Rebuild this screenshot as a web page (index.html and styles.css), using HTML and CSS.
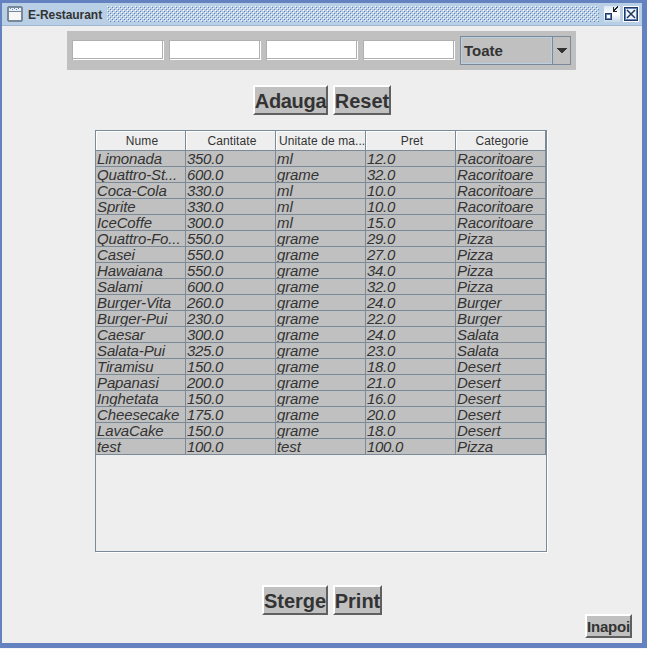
FILE: index.html
```
<!DOCTYPE html>
<html lang="ro">
<head>
<meta charset="utf-8">
<title>E-Restaurant</title>
<link rel="stylesheet" href="styles.css">
</head>
<body>
<main class="frame">
  <header class="titlebar">
    <svg class="appicon" width="16" height="16" shape-rendering="crispEdges">
      <rect width="16" height="16" fill="#778899"/>
      <path d="M2 2h12v3H2z" fill="#e8f1fc"/><path d="M2 6h12v8H2z" fill="#f7f7f7"/>
      <path d="M3 2h1v1H3zM5 3h1v1H5zM7 2h1v1H7zM9 3h1v1H9zM11 2h1v1h-1z" fill="#6382bf"/>
      <path d="M0 0h1v1H0zM15 0h1v1h-1zM0 15h1v1H0zM15 15h1v1h-1z" fill="#b8cfe5"/>
    </svg>
    <h1>E-Restaurant</h1>
    <svg class="bumps" width="492" height="16" shape-rendering="crispEdges">
      <defs><pattern id="bump" width="4" height="4" patternUnits="userSpaceOnUse">
        <path d="M0 0h1v1H0zM2 2h1v1H2z" fill="#fff"/><path d="M1 1h1v1H1zM3 3h1v1H3z" fill="#6382bf"/>
      </pattern></defs>
      <rect width="492" height="16" fill="url(#bump)"/>
    </svg>
    <svg class="wbtn" width="16" height="16" shape-rendering="crispEdges">
      <defs><linearGradient id="g" x2="0" y2="1"><stop stop-color="#dce8f4"/><stop offset=".5" stop-color="#fff"/><stop offset="1" stop-color="#c4d7ea"/></linearGradient></defs>
      <rect width="16" height="16" fill="url(#g)"/>
      <path d="M1 7h7v7H1z" fill="#24375f"/><path d="M2 8h5v5H2z" fill="#6382bf"/><path d="M3 9h3v3H3z" fill="#fff"/>
      <path d="M9 1h1v3h1v1h2v1H9zM10 4V3h1v1zM11 4V2h1v2zM12 3V1h1v2zM13 2V0h1v2z" fill="#222"/>
    </svg>
    <svg class="wbtn" width="16" height="16" shape-rendering="crispEdges">
      <rect width="16" height="16" fill="#fff"/><rect x="1" y="1" width="14" height="14" fill="#24375f"/>
      <rect x="2" y="2" width="12" height="12" fill="#6382bf"/><rect x="3" y="3" width="10" height="10" fill="#edf4fb"/>
      <path d="M4 4l8 8M12 4l-8 8" stroke="#24375f" stroke-width="1.5" shape-rendering="auto"/>
    </svg>
  </header>
  <section class="filters">
    <input class="field" aria-label="Nume"><input class="field" aria-label="Cantitate"><input class="field" aria-label="Unitate"><input class="field" aria-label="Pret">
    <div class="combo"><span>Toate</span><i><svg width="10" height="5" shape-rendering="crispEdges"><path d="M0 0h10v1H9v1H8v1H7v1H6v1H4V4H3V3H2V2H1V1H0z" fill="#333"/></svg></i></div>
  </section>
  <div class="actions"><button class="add">Adauga</button><button class="reset">Reset</button></div>
  <div class="tablebox">
    <table>
      <thead><tr><th>Nume</th><th>Cantitate</th><th>Unitate de ma...</th><th>Pret</th><th>Categorie</th></tr></thead>
      <tbody>
      <tr><td>Limonada</td><td>350.0</td><td>ml</td><td>12.0</td><td>Racoritoare</td></tr>
      <tr><td>Quattro-St...</td><td>600.0</td><td>grame</td><td>32.0</td><td>Racoritoare</td></tr>
      <tr><td>Coca-Cola</td><td>330.0</td><td>ml</td><td>10.0</td><td>Racoritoare</td></tr>
      <tr><td>Sprite</td><td>330.0</td><td>ml</td><td>10.0</td><td>Racoritoare</td></tr>
      <tr><td>IceCoffe</td><td>300.0</td><td>ml</td><td>15.0</td><td>Racoritoare</td></tr>
      <tr><td>Quattro-Fo...</td><td>550.0</td><td>grame</td><td>29.0</td><td>Pizza</td></tr>
      <tr><td>Casei</td><td>550.0</td><td>grame</td><td>27.0</td><td>Pizza</td></tr>
      <tr><td>Hawaiana</td><td>550.0</td><td>grame</td><td>34.0</td><td>Pizza</td></tr>
      <tr><td>Salami</td><td>600.0</td><td>grame</td><td>32.0</td><td>Pizza</td></tr>
      <tr><td>Burger-Vita</td><td>260.0</td><td>grame</td><td>24.0</td><td>Burger</td></tr>
      <tr><td>Burger-Pui</td><td>230.0</td><td>grame</td><td>22.0</td><td>Burger</td></tr>
      <tr><td>Caesar</td><td>300.0</td><td>grame</td><td>24.0</td><td>Salata</td></tr>
      <tr><td>Salata-Pui</td><td>325.0</td><td>grame</td><td>23.0</td><td>Salata</td></tr>
      <tr><td>Tiramisu</td><td>150.0</td><td>grame</td><td>18.0</td><td>Desert</td></tr>
      <tr><td>Papanasi</td><td>200.0</td><td>grame</td><td>21.0</td><td>Desert</td></tr>
      <tr><td>Inghetata</td><td>150.0</td><td>grame</td><td>16.0</td><td>Desert</td></tr>
      <tr><td>Cheesecake</td><td>175.0</td><td>grame</td><td>20.0</td><td>Desert</td></tr>
      <tr><td>LavaCake</td><td>150.0</td><td>grame</td><td>18.0</td><td>Desert</td></tr>
      <tr><td>test</td><td>100.0</td><td>test</td><td>100.0</td><td>Pizza</td></tr>
      </tbody>
    </table>
  </div>
  <div class="actions lower"><button class="del">Sterge</button><button class="print">Print</button></div>
  <button class="back">Inapoi</button>
</main>
</body>
</html>
```
FILE: styles.css
```
* { box-sizing: border-box; }
body {
  margin: 0;
  height: 649px;
  padding: 3px 5px 5px 2px;
  background: #6382bf;
  border-bottom: 1px solid #f4f6fa;
  font-family: "Liberation Sans", Arial, sans-serif;
  color: #333;
  overflow: hidden;
}
.frame {
  width: 640px;
  height: 640px;
  background: #eee;
  display: flex;
  flex-direction: column;
}
.titlebar {
  height: 23px;
  flex: none;
  background: #b8cfe5;
  border-bottom: 1px solid #9fb7d3;
  display: flex;
  padding: 3px 0 0 5px;
}
h1 {
  margin: 0 0 0 5px;
  width: 79px;
  font-size: 12px;
  letter-spacing: -0.05px;
  line-height: 18px;
  white-space: nowrap;
}
.bumps { margin-right: 5px; }
.wbtn { margin-right: 2px; }
.wbtn + .wbtn { margin-left: 1px; }
.filters {
  width: 509px;
  height: 39px;
  margin: 5px 0 0 65px;
  padding: 5px;
  background: #c0c0c0;
  display: flex;
  gap: 5px;
  align-items: flex-start;
  flex: none;
}
.field {
  width: 92px;
  height: 20px;
  margin: 4px 0 0;
  padding: 0;
  background: #fff;
  border: 1px solid #b0b0b0;
  border-right: 0;
  border-bottom: 0;
  border-radius: 0;
  box-shadow: inset -1px -1px #fff, inset -2px -2px #b0b0b0;
}
.combo {
  width: 111px;
  height: 29px;
  border: 1px solid #7a8a99;
  display: flex;
  font-weight: bold;
  font-size: 15px;
}
.combo span {
  width: 91px;
  border: 1px solid #b8cfe5;
  padding-left: 2px;
  line-height: 26px;
}
.combo i {
  flex: 1;
  border-left: 1px solid #7a8a99;
  display: flex;
  align-items: center;
  justify-content: center;
}
.actions {
  display: flex;
  gap: 5px;
  margin: 15px 0 0 251px;
  height: 30px;
  flex: none;
}
button {
  font: bold 20px/26px "Liberation Sans", Arial, sans-serif;
  color: #333;
  background: #c0c0c0;
  border: 2px solid;
  border-color: #fff #606060 #606060 #fff;
  border-radius: 0;
  padding: 1px 0 0;
  display: flex;
  justify-content: center;
  align-items: center;
  white-space: nowrap;
}
.add { width: 75px; letter-spacing: -0.3px; }
.reset { width: 58px; }
.tablebox {
  width: 452px;
  height: 422px;
  margin: 15px 0 0 93px;
  border: 1px solid #7a8a99;
  box-shadow: 1px 1px #fff;
  flex: none;
}
table {
  width: 450px;
  border-collapse: separate;
  border-spacing: 0;
  table-layout: fixed;
}
th {
  height: 20px;
  padding: 1px 0 0 3px;
  font-size: 12px;
  font-weight: normal;
  letter-spacing: 0.1px;
  line-height: 18px;
  white-space: nowrap;
  border-right: 1px solid #7a8a99;
  border-bottom: 1px solid #7a8a99;
  box-shadow: inset 1px 1px #fff;
}
td {
  height: 16px;
  padding: 0 0 0 1px;
  background: #c0c0c0;
  border-right: 1px solid #7a8a99;
  border-bottom: 1px solid #7a8a99;
  font-size: 15px;
  font-style: italic;
  letter-spacing: -0.12px;
  line-height: 15px;
  white-space: nowrap;
  overflow: hidden;
}
td:nth-child(2), td:nth-child(4) { letter-spacing: -0.3px; }
.lower { margin: 33px 0 0 260px; }
.del { width: 66px; }
.print { width: 49px; }
.back {
  width: 47px;
  height: 24px;
  margin: -1px 10px 0 0;
  align-self: flex-end;
  flex: none;
  font-size: 15px;
  letter-spacing: -0.15px;
  line-height: 19px;
}
```
